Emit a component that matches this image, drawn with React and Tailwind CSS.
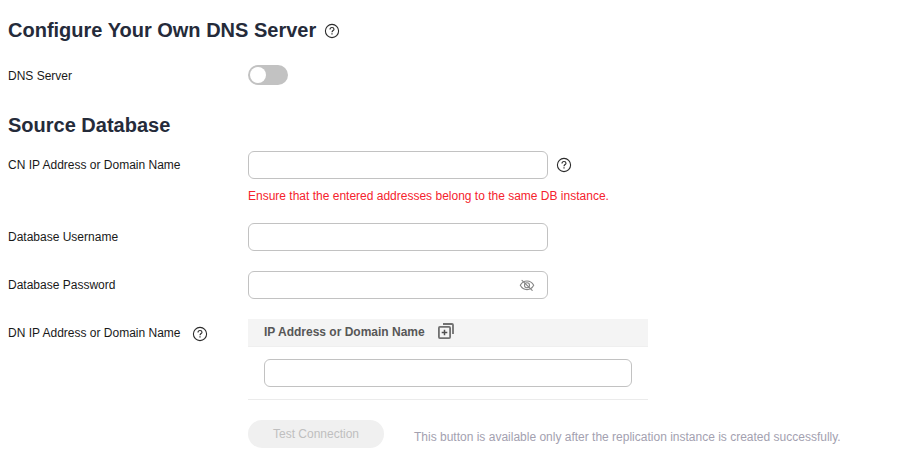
import React from 'react';

const HelpIcon = ({ className = '' }) => (
  <svg width="16" height="16" viewBox="0 0 16 16" fill="none" stroke="#2b2b2b" className={`shrink-0 ${className}`}>
    <circle cx="8" cy="8" r="6.6" strokeWidth="1.1" />
    <path d="M6 6.5C6 5.2 6.8 4.5 8 4.5s2 .7 2 1.7c0 1.3-2 1.4-2 3" strokeWidth="1.1" />
    <path d="M8 10.3v1.2" strokeWidth="1.2" />
  </svg>
);

const EyeOffIcon = () => (
  <svg width="16" height="16" viewBox="0 0 16 16" fill="none" stroke="#858585" strokeWidth="1.1" strokeLinecap="round">
    <path d="M1.3 8.3C2.8 5.5 5.2 4 8 4s5.2 1.5 6.7 4.3c-1.5 2.8-3.9 4.3-6.7 4.3s-5.2-1.5-6.7-4.3z" />
    <circle cx="8" cy="8.3" r="2.5" />
    <path d="M3 3.3l10.2 10" />
  </svg>
);

const AddCopyIcon = () => (
  <svg width="16" height="16" viewBox="0 0 16 16" fill="none" stroke="#707070" strokeWidth="1.8">
    <rect x="0.9" y="3.9" width="11.2" height="11.2" rx="1" />
    <path d="M5 1h9a1 1 0 0 1 1 1v9" />
    <path d="M6.5 6.7v5.6M3.7 9.5h5.6" stroke="#505050" strokeWidth="1.5" />
  </svg>
);

const TextInput = ({ type = 'text', className = '' }) => (
  <input
    type={type}
    className={`block h-7 border border-[#c2c2c2] rounded-md bg-white px-2.5 outline-none ${className}`}
  />
);

const Row = ({ label, help, labelClass = '', className = '', children }) => (
  <div className={`flex items-start ${className}`}>
    <div className={`w-60 h-7 shrink-0 flex items-center ${labelClass}`}>
      <span>{label}</span>
      {help && <HelpIcon className="ml-[11px] mt-0.5" />}
    </div>
    {children}
  </div>
);

const App = () => {
  return (
    <main className="w-[909px] h-[458px] overflow-hidden bg-white px-2 pt-[15px] text-xs text-[#191919] font-['Liberation_Sans',Arial,sans-serif]">
      <h2 className="flex items-center h-[30px] text-xl font-bold text-[#252b3a]">
        <span>Configure Your Own DNS Server</span>
        <HelpIcon className="ml-2 mt-0.5" />
      </h2>

      <Row label="DNS Server" labelClass="pt-0.5" className="mt-4">
        <button type="button" role="switch" aria-checked="false" className="mt-1 w-10 h-5 rounded-full bg-[#c2c2c2] p-0.5">
          <span className="block size-4 rounded-full bg-white" />
        </button>
      </Row>

      <h2 className="mt-[21px] flex items-center h-[30px] text-xl font-bold text-[#252b3a]">Source Database</h2>

      <Row label="CN IP Address or Domain Name" className="mt-[11px]">
        <div>
          <div className="flex items-center">
            <TextInput className="w-[300px]" />
            <HelpIcon className="ml-2" />
          </div>
          <p className="mt-2 h-[18px] leading-[18px] text-[#f5222d]">
            Ensure that the entered addresses belong to the same DB instance.
          </p>
        </div>
      </Row>

      <Row label="Database Username" className="mt-[18px]">
        <TextInput className="w-[300px]" />
      </Row>

      <Row label="Database Password" className="mt-5">
        <div className="relative">
          <TextInput type="password" className="w-[300px]" />
          <button type="button" className="absolute right-[13px] top-1.5">
            <EyeOffIcon />
          </button>
        </div>
      </Row>

      <Row label="DN IP Address or Domain Name" help className="mt-5">
        <div>
          <div className="w-[400px] border-b border-[#ebebeb]">
            <div className="flex items-center h-7 px-4 bg-[#f4f4f4] border-b border-[#efefef] font-bold text-[#575757]">
              <span className="-mt-0.5">IP Address or Domain Name</span>
              <button type="button" className="ml-[13px] -mt-1">
                <AddCopyIcon />
              </button>
            </div>
            <div className="px-4 py-3">
              <TextInput className="w-full" />
            </div>
          </div>

          {/* Connection test */}
          <div className="mt-5 flex items-start">
            <button type="button" disabled className="w-[136px] h-7 rounded-full bg-[#f0f0f0] text-[#bfbfbf]">
              Test Connection
            </button>
            <span className="ml-[30px] mt-2 leading-[18px] whitespace-nowrap text-[#a3a1b0]">
              This button is available only after the replication instance is created successfully.
            </span>
          </div>
        </div>
      </Row>
    </main>
  );
};

export default App;
